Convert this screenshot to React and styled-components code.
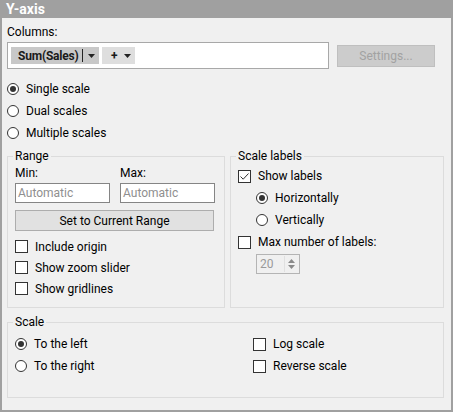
import React from "react";
import styled, { createGlobalStyle } from "styled-components";

const GlobalStyle = createGlobalStyle`
  body {
    margin: 0;
    font-family: Roboto, "Liberation Sans", Arial, sans-serif;
    font-size: 12px;
    color: #000;
    background: #f0f0f0;
  }
  * { box-sizing: border-box; }
`;

const Panel = styled.div`
  display: flex;
  flex-direction: column;
  width: 453px;
  height: 412px;
  background: #f0f0f0;
`;

const TitleBar = styled.div`
  height: 18px;
  line-height: 18px;
  padding-left: 6px;
  background: #a0a0a0;
  color: #fff;
  font-size: 14px;
  font-weight: bold;
`;

const Body = styled.div`
  flex: 1;
  border: 2px solid #a0a0a0;
  border-top: none;
  padding: 7px 7px 0 5px;
`;

const FieldLabel = styled.div`
  line-height: 15px;
  margin-bottom: ${(p) => p.$gap || 0}px;
`;

const ColumnsRow = styled.div`
  display: flex;
  align-items: flex-start;
`;

const ColumnBox = styled.div`
  display: flex;
  align-items: center;
  gap: 3px;
  width: 322px;
  height: 27px;
  padding: 0 3px;
  border: 1px solid #a8a8a8;
  background: #fff;
`;

const Chip = styled.div`
  display: flex;
  align-items: center;
  width: ${(p) => p.$width}px;
  height: 17px;
  padding: 0 4px 0 ${(p) => p.$pad}px;
  background: ${(p) => (p.$active ? "#c8c8c8" : "#dedede")};
  font-weight: bold;
  color: #1a1a1a;
`;

const ChipText = styled.span`
  flex: 1;
  white-space: nowrap;
  letter-spacing: -0.2px;
`;

const ChipDivider = styled.span`
  width: 1px;
  height: 13px;
  margin: 0 5px 0 3px;
  background: #222;
`;

const DisabledButton = styled.div`
  width: 98px;
  height: 22px;
  margin: 3px 0 0 8px;
  display: flex;
  align-items: center;
  justify-content: center;
  background: #cccccc;
  border: 1px solid #bfbfbf;
  color: #a2a2a2;
`;

const OptionList = styled.div`
  display: flex;
  flex-direction: column;
  margin-top: ${(p) => p.$top || 0}px;
`;

const OptionRow = styled.div`
  display: flex;
  align-items: center;
  gap: 7px;
  height: ${(p) => p.$h}px;
  padding-left: ${(p) => p.$indent || 0}px;
  white-space: nowrap;
`;

const RadioCircle = styled.span`
  display: flex;
  align-items: center;
  justify-content: center;
  width: 12px;
  height: 12px;
  border: 1px solid #333;
  border-radius: 50%;
  background: #fff;
  flex-shrink: 0;

  &::after {
    content: "";
    display: ${(p) => (p.$checked ? "block" : "none")};
    width: 6px;
    height: 6px;
    border-radius: 50%;
    background: #333;
  }
`;

const CheckBox = styled.span`
  display: flex;
  align-items: center;
  justify-content: center;
  width: 13px;
  height: 13px;
  border: 1px solid #333;
  background: #fff;
  flex-shrink: 0;
`;

const GroupsRow = styled.div`
  display: flex;
  gap: 5px;
  margin-top: 5px;
`;

const Group = styled.fieldset`
  width: ${(p) => p.$width || "auto"};
  min-width: 0;
  margin: ${(p) => p.$top || 0}px 0 0 0;
  padding: ${(p) => p.$padTop}px 6px ${(p) => p.$padBottom}px 7px;
  border: 1px solid #dcdcdc;
`;

const Legend = styled.legend`
  margin-left: -2px;
  padding: 0 2px;
  line-height: 15px;
`;

const RangeGrid = styled.div`
  display: grid;
  grid-template-columns: 95px 95px;
  column-gap: 10px;
  row-gap: 2px;
`;

const TextBox = styled.div`
  height: 20px;
  padding-left: 2px;
  display: flex;
  align-items: center;
  border: 1px solid #858585;
  background: #fff;
  color: #8f8f8f;
`;

const WideButton = styled.div`
  width: 199px;
  height: 21px;
  margin-top: 7px;
  display: flex;
  align-items: center;
  justify-content: center;
  background: #e1e1e1;
  border: 1px solid #adadad;
`;

const Spinner = styled.div`
  display: flex;
  align-items: center;
  justify-content: space-between;
  width: 44px;
  height: 20px;
  margin: 1px 0 0 18px;
  padding: 0 1px 0 3px;
  border: 1px solid #b4b4b4;
  color: #9a9a9a;
`;

const SpinArrows = styled.div`
  display: flex;
  flex-direction: column;
  justify-content: center;
  gap: 2px;
  width: 14px;
  height: 16px;
  border-left: 1px solid #e0e0e0;
  align-items: center;
`;

const ScaleColumns = styled.div`
  display: grid;
  grid-template-columns: 238px 1fr;
  grid-auto-flow: column;
  grid-template-rows: 22px 22px;
`;

function Caret({ color = "#222" }) {
  return (
    <svg width="7" height="4" viewBox="0 0 7 4">
      <path d="M0 0 H7 L3.5 4 Z" fill={color} />
    </svg>
  );
}

function Radio({ checked, label, h = 22, indent }) {
  return (
    <OptionRow $h={h} $indent={indent}>
      <RadioCircle $checked={checked} />
      <span>{label}</span>
    </OptionRow>
  );
}

function Check({ checked, label, h = 22, indent }) {
  return (
    <OptionRow $h={h} $indent={indent}>
      <CheckBox>
        {checked && (
          <svg width="11" height="11" viewBox="0 0 11 11">
            <path d="M1.5 5.5 L4.2 8.2 L9.5 2.5" fill="none" stroke="#333" strokeWidth="1" />
          </svg>
        )}
      </CheckBox>
      <span>{label}</span>
    </OptionRow>
  );
}

export default function App() {
  return (
    <>
      <GlobalStyle />
      <Panel>
        <TitleBar>Y-axis</TitleBar>
        <Body>
          <FieldLabel $gap={2}>Columns:</FieldLabel>
          <ColumnsRow>
            <ColumnBox>
              <Chip $active $width={88} $pad={7}>
                <ChipText>Sum(Sales)</ChipText>
                <ChipDivider />
                <Caret />
              </Chip>
              <Chip $width={33} $pad={9}>
                <ChipText>+</ChipText>
                <Caret />
              </Chip>
            </ColumnBox>
            <DisabledButton>Settings...</DisabledButton>
          </ColumnsRow>

          <OptionList $top={9}>
            <Radio checked label="Single scale" />
            <Radio label="Dual scales" />
            <Radio label="Multiple scales" />
          </OptionList>

          <GroupsRow>
            <Group $width="218px" $padTop={2} $padBottom={8}>
              <Legend>Range</Legend>
              <RangeGrid>
                <FieldLabel>Min:</FieldLabel>
                <FieldLabel>Max:</FieldLabel>
                <TextBox>Automatic</TextBox>
                <TextBox>Automatic</TextBox>
              </RangeGrid>
              <WideButton>Set to Current Range</WideButton>
              <OptionList $top={5}>
                <Check h={21} label="Include origin" />
                <Check h={21} label="Show zoom slider" />
                <Check h={21} label="Show gridlines" />
              </OptionList>
            </Group>

            <Group $width="214px" $padTop={1} $padBottom={8}>
              <Legend>Scale labels</Legend>
              <OptionList>
                <Check checked label="Show labels" />
                <Radio checked indent={18} label="Horizontally" />
                <Radio indent={18} label="Vertically" />
                <Check label="Max number of labels:" />
              </OptionList>
              <Spinner>
                <span>20</span>
                <SpinArrows>
                  <svg width="7" height="4" viewBox="0 0 7 4">
                    <path d="M0 4 H7 L3.5 0 Z" fill="#8a8a8a" />
                  </svg>
                  <Caret color="#8a8a8a" />
                </SpinArrows>
              </Spinner>
            </Group>
          </GroupsRow>

          <Group $top={7} $padTop={3} $padBottom={20}>
            <Legend>Scale</Legend>
            <ScaleColumns>
              <Radio checked label="To the left" />
              <Radio label="To the right" />
              <Check label="Log scale" />
              <Check label="Reverse scale" />
            </ScaleColumns>
          </Group>
        </Body>
      </Panel>
    </>
  );
}
